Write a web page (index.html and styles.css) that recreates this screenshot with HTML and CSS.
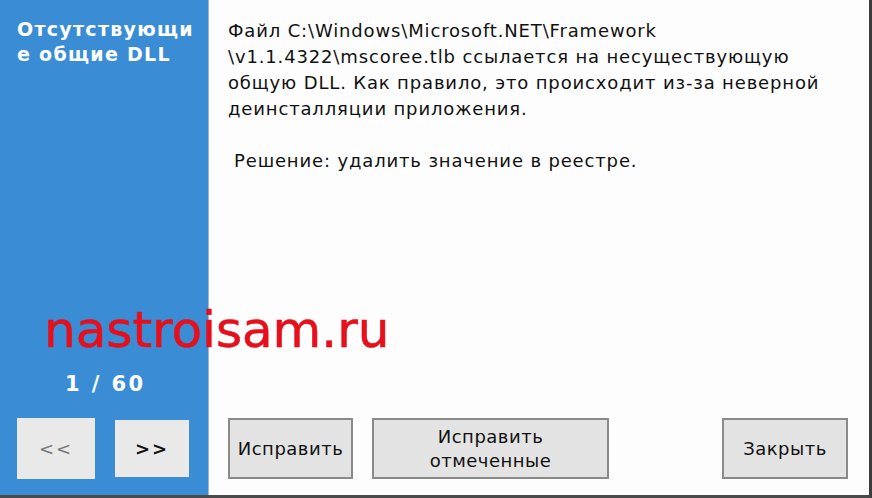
FILE: index.html
```html
<!DOCTYPE html>
<html lang="ru">

<head>
  <meta charset="UTF-8">
  <title>Отсутствующие общие DLL</title>
  <link rel="stylesheet" href="styles.css">
</head>

<body>
  <div class="window">
    <div class="sidebar">
      <div class="sideTitle">Отсутствующи<br>е общие DLL</div>
      <div class="counter">1 / 60</div>
      <div class="nav">
        <div class="navBtn prev">&lt;&lt;</div>
        <div class="navBtn next">&gt;&gt;</div>
      </div>
    </div>

    <div class="main">
      <div class="message">
        <p>Файл C:\Windows\Microsoft.NET\Framework<br>\v1.1.4322\mscoree.tlb ссылается на несуществующую<br>общую DLL. Как правило, это происходит из-за неверной<br>деинсталляции приложения.</p>
        <p class="solution">Решение: удалить значение в реестре.</p>
      </div>
      <div class="actions">
        <div class="btn fix">Исправить</div>
        <div class="btn fixChecked">Исправить<br>отмеченные</div>
        <div class="btn close">Закрыть</div>
      </div>
    </div>

    <div class="watermark">nastroisam.ru</div>
  </div>
</body>

</html>
```

FILE: styles.css
```css
* {
  margin: 0;
  padding: 0;
  box-sizing: border-box;
}
body {
  width: 872px;
  height: 498px;
  overflow: hidden;
  background: #fdfdfd;
}
.window {
  position: relative;
  display: flex;
  width: 872px;
  height: 498px;
  border-right: 3px solid #3c3c3c;
  border-bottom: 3px solid #4a4a4a;
  font-family: "DejaVu Sans", sans-serif;
}
.sidebar {
  width: 209px;
  flex-shrink: 0;
  background: #3a8dd5;
  border-right: 1px solid #9fb7cc;
  display: flex;
  flex-direction: column;
  padding: 17px 0 16px 17px;
}
.sideTitle {
  color: #fff;
  font-weight: bold;
  font-size: 19px;
  line-height: 25px;
  letter-spacing: 1.3px;
  white-space: nowrap;
}
.counter {
  margin-top: auto;
  margin-left: 48px;
  color: #fff;
  font-weight: bold;
  font-size: 21px;
  line-height: 24px;
  letter-spacing: 2.4px;
}
.nav {
  display: flex;
  gap: 20px;
  margin-top: 22px;
  align-items: center;
}
.navBtn {
  background: #e9e9e9;
  height: 61px;
  display: flex;
  align-items: center;
  justify-content: center;
  font-size: 18px;
  letter-spacing: 2px;
}
.prev {
  width: 78px;
  color: #777;
  font-weight: normal;
}
.next {
  width: 74px;
  height: 57px;
  color: #111;
  font-weight: bold;
}
.main {
  flex: 1;
  display: flex;
  flex-direction: column;
  padding: 18px 0 16px 19px;
}
.message {
  color: #111;
  font-size: 18px;
  line-height: 26px;
  letter-spacing: 0.85px;
  white-space: nowrap;
}
.solution {
  margin-top: 26px;
  padding-left: 6px;
}
.actions {
  margin-top: auto;
  display: flex;
  gap: 19px;
  padding-right: 21px;
}
.btn {
  height: 61px;
  background: #e3e3e3;
  border: 2px solid #8a8a8a;
  display: flex;
  align-items: center;
  justify-content: center;
  text-align: center;
  color: #111;
  font-size: 18px;
  line-height: 24px;
  letter-spacing: 0.5px;
}
.fix {
  width: 125px;
}
.fixChecked {
  width: 237px;
}
.close {
  width: 126px;
  margin-left: auto;
}
.watermark {
  position: absolute;
  left: 44px;
  top: 300px;
  color: #e60f1b;
  font-size: 50px;
  line-height: 60px;
  -webkit-text-stroke: 0.6px #e60f1b;
}
```
